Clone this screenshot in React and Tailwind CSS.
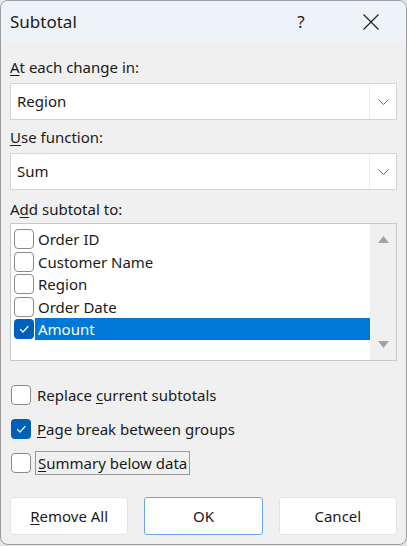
const font = { fontFamily: '"Noto Sans", "Open Sans", sans-serif' };

const Chevron = () => (
    <svg width="11" height="6" viewBox="0 0 11 6" fill="none">
        <path d="M0.5 0.5 L5.5 5.5 L10.5 0.5" stroke="#6b6b6b" strokeWidth="1" />
    </svg>
);

const Check = ({ size = 12 }) => (
    <svg width={size} height={size} viewBox="0 0 12 12" fill="none">
        <path d="M2.5 6.5 L5 9 L10 3.5" stroke="white" strokeWidth="1.2" strokeLinecap="round" strokeLinejoin="round" />
    </svg>
);

const Close = () => (
    <svg width="16" height="16" viewBox="0 0 16 16" fill="none">
        <path d="M0.5 0.5 L15.5 15.5 M15.5 0.5 L0.5 15.5" stroke="#1a1a1a" strokeWidth="1.1" />
    </svg>
);

const Box = ({ checked }) =>
    checked ? (
        <div className="w-[20px] h-[20px] rounded-[4px] bg-[#005fb8] flex items-center justify-center shrink-0">
            <Check />
        </div>
    ) : (
        <div className="w-[20px] h-[20px] rounded-[4px] border border-[#8a8a8a] bg-white shrink-0" />
    );

const Combo = ({ value }) => (
    <div className="h-[37px] flex border border-[#d4d4d4] bg-white">
        <div className="flex-1 flex items-center pl-[6px] text-[15px] text-[#1a1a1a]">{value}</div>
        <div className="w-[27px] flex items-center justify-center border-l border-[#ececec] bg-white">
            <Chevron />
        </div>
    </div>
);

const fields = [
    { name: 'Order ID', checked: false },
    { name: 'Customer Name', checked: false },
    { name: 'Region', checked: false },
    { name: 'Order Date', checked: false },
    { name: 'Amount', checked: true },
];

export default function App() {
    return (
        <div className="w-[407px] h-[546px] bg-[#e4e4e4]" style={font}>
            <div className="w-full h-[545px] flex flex-col rounded-[8px] border border-[#9c9c9c] bg-[#f0f0f0] overflow-hidden text-[#1a1a1a]">
                {/* Title bar */}
                <div className="h-[41px] flex items-center bg-[#eef3fa] pl-[9px] shrink-0">
                    <span className="text-[17px] flex-1">Subtotal</span>
                    <span className="text-[17px] w-[20px] text-center mr-[52px]">?</span>
                    <div className="mr-[27px]">
                        <Close />
                    </div>
                </div>

                <div className="flex flex-col px-[9px]">
                    <div className="mt-[15px] mb-[6px] h-[20px] leading-[20px] text-[15px]">
                        <span className="underline underline-offset-2">A</span>t each change in:
                    </div>
                    <Combo value="Region" />

                    <div className="mt-[7px] mb-[6px] h-[20px] leading-[20px] text-[15px]">
                        <span className="underline underline-offset-2">U</span>se function:
                    </div>
                    <Combo value="Sum" />

                    <div className="mt-[9px] mb-[4px] h-[20px] leading-[20px] text-[15px]">
                        A<span className="underline underline-offset-2">d</span>d subtotal to:
                    </div>

                    {/* List box */}
                    <div className="h-[138px] flex border border-[#c8c8c8] bg-white">
                        <div className="flex-1 flex flex-col pt-[4px] pl-[3px]">
                            {fields.map((f) => (
                                <div key={f.name} className="h-[22.5px] flex items-center">
                                    <Box checked={f.checked} />
                                    <div
                                        className={`flex-1 h-[22px] flex items-center ml-[1px] pl-[3px] text-[15px] ${f.checked ? 'bg-[#0078d7] text-white' : ''}`}
                                    >
                                        {f.name}
                                    </div>
                                </div>
                            ))}
                        </div>
                        <div className="w-[26px] flex flex-col items-center justify-between py-[12px] bg-[#f0f0f0]">
                            <svg width="11" height="7" viewBox="0 0 11 7">
                                <path d="M5.5 0 L11 7 L0 7 Z" fill="#a3a3a3" />
                            </svg>
                            <svg width="11" height="7" viewBox="0 0 11 7">
                                <path d="M0 0 L11 0 L5.5 7 Z" fill="#a3a3a3" />
                            </svg>
                        </div>
                    </div>

                    {/* Options */}
                    <div className="flex flex-col gap-[14px] mt-[24px] pl-[1px]">
                        <div className="h-[20px] flex items-center gap-[6px] text-[15px]">
                            <Box checked={false} />
                            <span>
                                Replace <span className="underline underline-offset-2">c</span>urrent subtotals
                            </span>
                        </div>
                        <div className="h-[20px] flex items-center gap-[6px] text-[15px]">
                            <Box checked />
                            <span>
                                <span className="underline underline-offset-2">P</span>age break between groups
                            </span>
                        </div>
                        <div className="h-[20px] flex items-center gap-[4px] text-[15px]">
                            <Box checked={false} />
                            <span className="border border-[#9a9a9a] px-[2px] h-[24px] flex items-center">
                                <span className="underline underline-offset-2">S</span>ummary below data
                            </span>
                        </div>
                    </div>

                    {/* Buttons */}
                    <div className="flex gap-[16px] mt-[24px]">
                        <button className="flex-1 h-[38px] bg-white border border-[#e3e3e3] rounded-[3px] text-[15px]">
                            <span className="underline underline-offset-2">R</span>emove All
                        </button>
                        <button className="flex-1 h-[38px] bg-white border border-[#6aa6e6] rounded-[3px] text-[15px]">
                            OK
                        </button>
                        <button className="flex-1 h-[38px] bg-white border border-[#e3e3e3] rounded-[3px] text-[15px]">
                            Cancel
                        </button>
                    </div>
                </div>
            </div>
        </div>
    );
}
